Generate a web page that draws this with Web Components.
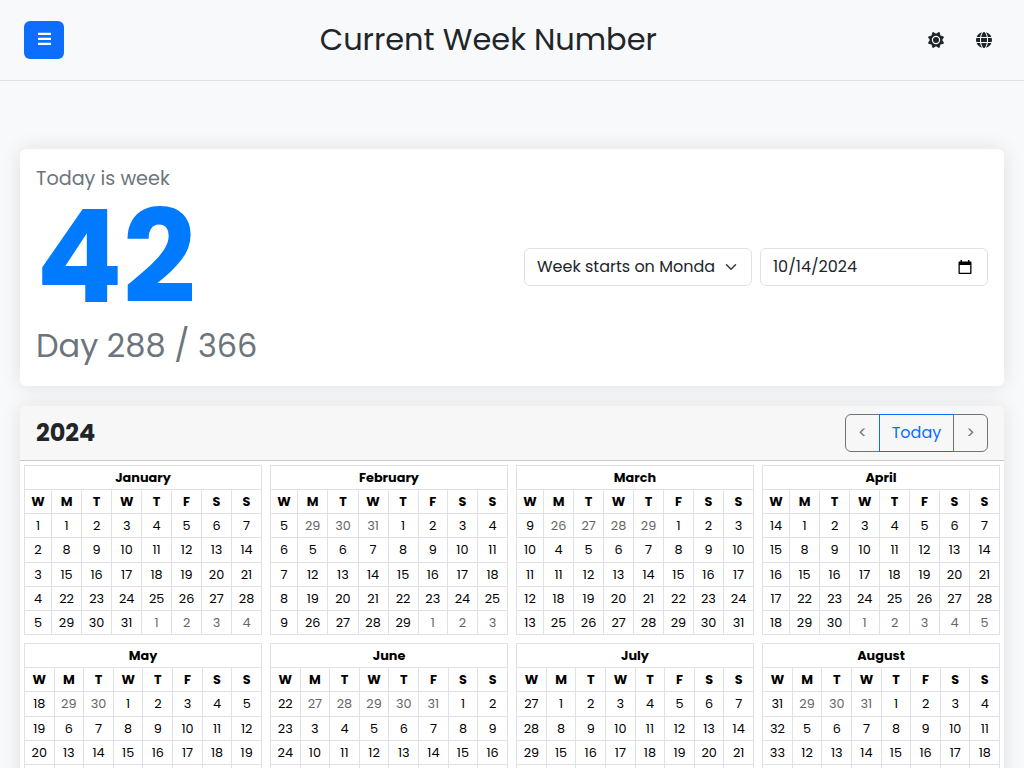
<!DOCTYPE html>
<html lang="en">
<head>
<meta charset="utf-8">
<title>Current Week Number</title>
<style>
  body {
    margin: 0;
    height: 768px;
    overflow: hidden;
    background: #f8f9fb;
    color: #212529;
    font: 16px/1.5 Poppins, Inter, sans-serif;
  }
</style>
</head>
<body>
<week-app></week-app>

<script>
// Small helper so every element gets its shadow root the same way
class BaseElement extends HTMLElement {
  constructor() {
    super();
    this.attachShadow({ mode: 'open' });
  }

  connectedCallback() {
    this.shadowRoot.innerHTML = this.template();
  }
}

// Icon.js
const ICONS = {
  sun: `<path fill-rule="evenodd" transform="scale(.03125)" d="M361 1Q370 5 372 14L400 112 498 140Q514 148 509 166L455 256 509 346Q514 364 498 372L400 400 372 498Q364 514 346 509L256 455 166 509Q148 514 140 498L112 400 14 372Q-2 364 3 346L57 256 3 166Q-2 148 14 140L112 112 140 14Q148-2 166 3L256 57 346 3ZM390 256a134 134 0 1 0-268 0 134 134 0 1 0 268 0ZM160 256a96 96 0 1 1 192 0 96 96 0 1 1-192 0Z"/>`,
  globe: `<path d="M11 8c0 .7 0 1.400-.1 2H5.100C5 9.400 5 8.700 5 8s0-1.400.1-2h5.800c.1.600.1 1.300.1 2Zm.9-2h3.800a8 8 0 0 1 0 4h-3.800a19 19 0 0 0 0-4Zm3.500-1h-3.600C11.400 3 10.800 1.300 10 .2A8 8 0 0 1 15.400 5Zm-4.700 0H5.300c.2-1.100.5-2.100.8-2.900C6.800.5 7.500 0 8 0s1.200.5 1.900 2.100c.3.800.6 1.800.8 2.900ZM4.200 5H.600A8 8 0 0 1 6 .2C5.200 1.300 4.600 3 4.200 5ZM.300 6h3.800a19 19 0 0 0 0 4H.300a8 8 0 0 1 0-4Zm5 5h5.400c-.2 1.100-.5 2.100-.8 2.900C9.200 15.500 8.500 16 8 16s-1.200-.5-1.900-2.100c-.3-.8-.6-1.800-.8-2.900ZM6 15.800A8 8 0 0 1 .6 11h3.600c.4 2 1 3.700 1.800 4.800Zm4 0c.8-1.100 1.400-2.800 1.800-4.800h3.600a8 8 0 0 1-5.400 4.800Z"/>`
};

class WeekIcon extends BaseElement {
  template() {
    return `
      <style>
        :host { display: block; width: 16px; height: 16px; }
        svg { display: block; fill: #212529; }
      </style>
      <svg width="16" height="16" viewBox="0 0 16 16">${ICONS[this.getAttribute('name')]}</svg>
    `;
  }
}
customElements.define('week-icon', WeekIcon);

// Header.js
class WeekHeader extends BaseElement {
  template() {
    return `
      <style>
        :host {
          display: flex;
          align-items: center;
          justify-content: space-between;
          box-sizing: border-box;
          height: 81px;
          padding: 0 32px 0 24px;
          border-bottom: 1px solid #dee2e6;
        }
        button {
          display: grid;
          place-items: center;
          box-sizing: border-box;
          width: 40px;
          height: 38px;
          padding: 0 0 3px 1px;
          border: 0;
          border-radius: 6px;
          background: #0d6efd;
        }
        svg { display: block; }
        h1 { margin: 0; font-size: 30.416px; font-weight: 400; line-height: 1.2; white-space: nowrap; }
        nav { display: flex; gap: 32px; padding-left: 15.5px; }
      </style>
      <button aria-label="Menu">
        <svg width="13" height="13" viewBox="0 0 13 13" fill="#fff"><path d="M0 .7h13V3H0zM0 5.700h13V8H0zM0 10.700h13V13H0z"/></svg>
      </button>
      <h1><slot></slot></h1>
      <nav><week-icon name="sun"></week-icon><week-icon name="globe"></week-icon></nav>
    `;
  }
}
customElements.define('week-header', WeekHeader);

// Card.js
class WeekCard extends BaseElement {
  template() {
    return `
      <style>
        :host {
          display: block;
          border-radius: 6px;
          background: #fff;
          box-shadow: 0 0 20px rgba(0, 0, 0, 0.1);
        }
      </style>
      <slot></slot>
    `;
  }
}
customElements.define('week-card', WeekCard);

// Field.js
class WeekField extends BaseElement {
  template() {
    const date = this.getAttribute('type') === 'date';
    const icon = date
      ? '<svg width="14" height="15" viewBox="0 0 14 15"><path d="M2.500 0H4v1.500h6V0h1.500v1.500h1c.6 0 1 .4 1 1v10.500c0 .6-.4 1-1 1h-11c-.6 0-1-.4-1-1V2.500c0-.6.4-1 1-1h1ZM1.800 5v7.700h10.400V5Z"/></svg>'
      : '<svg width="16" height="12" viewBox="0 0 16 16"><path fill="none" stroke="#343a40" stroke-width="2" stroke-linecap="round" stroke-linejoin="round" d="m2 5 6 6 6-6"/></svg>';
    return `
      <style>
        :host {
          display: flex;
          align-items: center;
          justify-content: space-between;
          box-sizing: border-box;
          width: 228px;
          height: 38px;
          padding: 0 ${date ? 15 : 12}px 0 12px;
          border: 1px solid #dee2e6;
          border-radius: 6px;
          background: #fff;
        }
        span { overflow: hidden; white-space: nowrap; }
        svg { flex: none; }
      </style>
      <span><slot></slot></span>${icon}
    `;
  }
}
customElements.define('week-field', WeekField);

// Summary.js
class WeekSummary extends BaseElement {
  template() {
    return `
      <style>
        :host {
          display: flex;
          align-items: center;
          justify-content: space-between;
          box-sizing: border-box;
          height: 237px;
          padding: 16px;
        }
        .label { color: #6c757d; font-size: 19.2px; line-height: 28.8px; }
        .week { color: #007bff; font-size: 128px; font-weight: 700; line-height: 128px; }
        .day { color: #6c757d; font-size: 32px; line-height: 48px; }
        .controls { display: flex; gap: 8px; }
      </style>
      <div>
        <div class="label">Today is week</div>
        <div class="week">42</div>
        <div class="day">Day 288 / 366</div>
      </div>
      <div class="controls">
        <week-field>Week starts on Monda</week-field>
        <week-field type="date">10/14/2024</week-field>
      </div>
    `;
  }
}
customElements.define('week-summary', WeekSummary);

// YearBar.js
class YearBar extends BaseElement {
  template() {
    return `
      <style>
        :host {
          display: flex;
          align-items: center;
          justify-content: space-between;
          box-sizing: border-box;
          height: 55px;
          padding: 0 16px;
          border-bottom: 1px solid #c6c7c8;
          border-radius: 6px 6px 0 0;
          background: #f7f7f7;
        }
        h2 { margin: 1px 0 0; font-size: 24px; font-weight: 700; line-height: 1.2; }
        .group { display: flex; }
        button {
          box-sizing: border-box;
          width: 35px;
          height: 38px;
          padding: 0;
          border: 1px solid #6c757d;
          background: none;
          color: #6c757d;
          font: inherit;
        }
        .prev { border-radius: 6px 0 0 6px; }
        .today { width: 75px; margin-left: -1px; border-color: #0d6efd; color: #0d6efd; }
        .next { margin-left: -1px; border-radius: 0 6px 6px 0; }
      </style>
      <h2><slot></slot></h2>
      <div class="group">
        <button class="prev">&lt;</button>
        <button class="today">Today</button>
        <button class="next">&gt;</button>
      </div>
    `;
  }
}
customElements.define('year-bar', YearBar);

// MonthTable.js
const MONTHS = ['January', 'February', 'March', 'April', 'May', 'June', 'July', 'August'];

class MonthTable extends BaseElement {
  rows() {
    const year = 2024;
    const month = Number(this.getAttribute('month'));
    const shift = (new Date(year, month, 1).getDay() + 6) % 7;
    const days = new Date(year, month + 1, 0).getDate();
    // 1 January 2024 is a Monday, so week 1 starts on day 1
    const before = Math.round((Date.UTC(year, month, 1) - Date.UTC(year, 0, 1)) / 864e5) - shift;
    let html = '';
    for (let week = 0; week * 7 < shift + days; week++) {
      html += `<tr><td>${before / 7 + week + 1}</td>`;
      for (let i = 0; i < 7; i++) {
        const day = week * 7 + i - shift + 1;
        const out = day < 1 || day > days;
        html += `<td${out ? ' class="out"' : ''}>${new Date(year, month, day).getDate()}</td>`;
      }
      html += '</tr>';
    }
    return html;
  }

  template() {
    const month = Number(this.getAttribute('month'));
    return `
      <style>
        :host { display: block; }
        table {
          width: 100%;
          border-collapse: collapse;
          color: #000;
          font-size: 12.8px;
          line-height: 19.2px;
          text-align: center;
        }
        th, td { padding: 2px; border: 1px solid #dee2e6; white-space: nowrap; }
        th { font-weight: 700; }
        .out { color: #666; }
      </style>
      <table>
        <tr><th colspan="8">${MONTHS[month]}</th></tr>
        <tr>${'WMTWTFSS'.split('').map(d => `<th>${d}</th>`).join('')}</tr>
        ${this.rows()}
      </table>
    `;
  }
}
customElements.define('month-table', MonthTable);

// App.js
class WeekApp extends BaseElement {
  template() {
    return `
      <style>
        :host { display: block; height: 768px; overflow: hidden; }
        main { display: flex; flex-direction: column; gap: 20px; padding: 67.78px 20px 0; }
        .months { display: grid; grid-template-columns: repeat(4, 1fr); gap: 7.9px 8px; padding: 4px; }
      </style>
      <week-header>Current Week Number</week-header>
      <main>
        <week-card><week-summary></week-summary></week-card>
        <week-card>
          <year-bar>2024</year-bar>
          <div class="months">
            ${MONTHS.map((name, i) => `<month-table month="${i}"></month-table>`).join('')}
          </div>
        </week-card>
      </main>
    `;
  }
}
customElements.define('week-app', WeekApp);
</script>
</body>
</html>
